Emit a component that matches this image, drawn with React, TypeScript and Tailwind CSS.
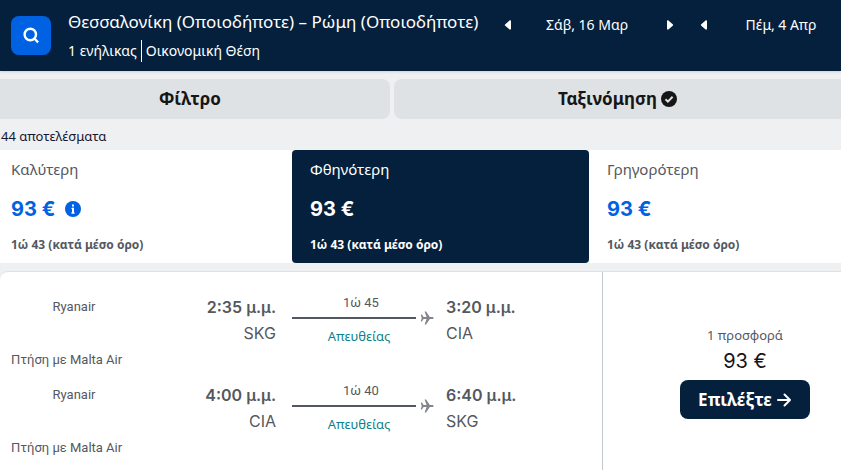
import { useState } from 'react'

type Leg = {
  airline: string
  operator: string
  departTime: string
  from: string
  arriveTime: string
  to: string
  duration: string
  stops: string
}

const LEGS: Leg[] = [
  {
    airline: 'Ryanair',
    operator: 'Πτήση με Malta Air',
    departTime: '2:35 μ.μ.',
    from: 'SKG',
    arriveTime: '3:20 μ.μ.',
    to: 'CIA',
    duration: '1ώ 45',
    stops: 'Απευθείας',
  },
  {
    airline: 'Ryanair',
    operator: 'Πτήση με Malta Air',
    departTime: '4:00 μ.μ.',
    from: 'CIA',
    arriveTime: '6:40 μ.μ.',
    to: 'SKG',
    duration: '1ώ 40',
    stops: 'Απευθείας',
  },
]

const SORTS = [
  { key: 'best', label: 'Καλύτερη', price: '93 €', average: '1ώ 43 (κατά μέσο όρο)', info: true },
  { key: 'cheapest', label: 'Φθηνότερη', price: '93 €', average: '1ώ 43 (κατά μέσο όρο)', info: false },
  { key: 'fastest', label: 'Γρηγορότερη', price: '93 €', average: '1ώ 43 (κατά μέσο όρο)', info: false },
]

function Triangle({ flip = false }: { flip?: boolean }) {
  return (
    <svg className="h-3 w-3" viewBox="0 0 12 12" fill="currentColor">
      <path
        d={
          flip
            ? 'M3 2.5v7c0 1.200.9 1.500 1.700.8l4-3.500a1 1 0 000-1.600l-4-3.500C3.900 1 3 1.300 3 2.500z'
            : 'M9 2.500v7c0 1.200-.9 1.500-1.700.8l-4-3.500a1 1 0 010-1.600l4-3.500C8.100 1 9 1.300 9 2.500z'
        }
      />
    </svg>
  )
}

function Plane() {
  return (
    <svg className="h-[14px] w-[14px] shrink-0 text-[#82858e]" viewBox="0 0 14 14" fill="currentColor">
      <path d="M.8 3.400h1.100l1.700 2.500h3L4.600.6h1.500l3.700 5.300h2.500c.7 0 1.300.5 1.300 1.100s-.6 1.100-1.300 1.100H9.800l-3.700 5.300H4.600l2-5.300h-3l-1.700 2.500H.8L1.700 7z" />
    </svg>
  )
}

function LegRow({ leg }: { leg: Leg }) {
  return (
    <div className="h-[88px]">
      <div className="flex h-16">
        <div className="w-[148px] pt-2 text-center font-[Roboto,sans-serif] text-[13px] leading-[22px]">
          {leg.airline}
        </div>
        <div className="flex-1 pt-[6px] text-right leading-[26px]">
          <div className="font-semibold">{leg.departTime}</div>
          <div>{leg.from}</div>
        </div>
        <div className="w-[170px] pl-4">
          <div className="pt-1 pr-4 text-center font-[Roboto,sans-serif] text-[13px] leading-[22px]">
            {leg.duration}
          </div>
          <div className="flex h-2 items-center gap-1 pr-3">
            <div className="h-[2px] flex-1 bg-[#545860]" />
            <Plane />
          </div>
          <div className="pt-1 pr-5 text-center font-['Noto_Sans',sans-serif] text-[13px] leading-5 text-[#0c838a]">
            {leg.stops}
          </div>
        </div>
        <div className="w-[156px] pt-[6px] leading-[26px]">
          <div className="font-semibold">{leg.arriveTime}</div>
          <div>{leg.to}</div>
        </div>
      </div>
      <div className="pl-[11px] font-[Roboto,sans-serif] text-[13px] leading-4">{leg.operator}</div>
    </div>
  )
}

export default function App() {
  const [sort, setSort] = useState('cheapest')

  return (
    <div className="min-h-screen overflow-hidden bg-[#eff0f2] font-['Noto_Sans',sans-serif] text-[#545860]">
      {/* Header */}
      <header className="flex h-[71px] bg-[#05203c] text-white shadow">
        <button
          aria-label="Αναζήτηση"
          className="mt-4 ml-[11px] flex h-[39px] w-10 shrink-0 items-center justify-center rounded-lg bg-[#0062e3]"
        >
          <svg className="h-[17px] w-[17px]" viewBox="0 0 17 17" fill="none" stroke="currentColor" strokeWidth="2.4">
            <circle cx="7.300" cy="7.500" r="5.700" />
            <path d="M11.300 11.500l3.800 3.800" />
          </svg>
        </button>
        <div className="ml-[17px] w-[434px] shrink-0 whitespace-nowrap">
          <h1 className="pt-2 text-[17px] leading-7">Θεσσαλονίκη (Οποιοδήποτε) – Ρώμη (Οποιοδήποτε)</h1>
          <div className="flex pt-1 text-sm leading-[22px]">
            <span className="border-r border-white pr-1">1 ενήλικας</span>
            <span className="pl-1">Οικονομική Θέση</span>
          </div>
        </div>
        <div className="flex h-[50px] flex-1 items-center text-sm whitespace-nowrap">
          <button aria-label="Προηγούμενη ημέρα αναχώρησης">
            <Triangle />
          </button>
          <span className="w-[150px] shrink-0 pr-1 text-center">Σάβ, 16 Μαρ</span>
          <button aria-label="Επόμενη ημέρα αναχώρησης">
            <Triangle flip />
          </button>
          <button className="ml-[22px]" aria-label="Προηγούμενη ημέρα επιστροφής">
            <Triangle />
          </button>
          <span className="w-[142px] shrink-0 text-center">Πέμ, 4 Απρ</span>
        </div>
      </header>

      {/* Filter and sort */}
      <div className="mt-2 grid grid-cols-[390fr_447fr] gap-1 text-[17px] font-bold text-[#161616]">
        <button className="h-10 rounded-r-lg bg-[#dfe2e5] pr-[10px]">Φίλτρο</button>
        <button className="flex h-10 items-center justify-center gap-1 rounded-l-lg bg-[#dfe2e5]">
          Ταξινόμηση
          <svg className="h-4 w-4" viewBox="0 0 16 16">
            <circle cx="8" cy="8" r="8" fill="currentColor" />
            <path d="M4.500 8.300l2.400 2.300 4.700-4.800" fill="none" stroke="#dfe2e5" strokeWidth="2" />
          </svg>
        </button>
      </div>

      <p className="h-[31px] pt-2 pl-px text-[13px] leading-[18px] text-[#161630]">44 αποτελέσματα</p>

      {/* Sort tabs */}
      <div className="grid grid-cols-[292fr_297fr_252fr] bg-white">
        {SORTS.map((item, i) => {
          const active = item.key === sort
          return (
            <button
              key={item.key}
              onClick={() => setSort(item.key)}
              className={`h-[113px] rounded pb-[2px] text-left ${i === 0 ? 'pl-[11px]' : 'pl-[18px]'} ${
                active ? 'bg-[#05203c] text-white' : 'bg-white'
              }`}
            >
              <div className="text-[15px] leading-6">{item.label}</div>
              <div
                className={`flex items-center gap-[10px] pt-[14px] font-[Inter,sans-serif] text-xl leading-7 font-bold ${
                  active ? 'text-white' : 'text-[#0062e3]'
                }`}
              >
                {item.price}
                {item.info && (
                  <svg className="h-4 w-4" viewBox="0 0 16 16">
                    <circle cx="8" cy="8" r="8" fill="currentColor" />
                    <path d="M8 3.400v2M8 6.800v5.600" fill="none" stroke="#fff" strokeWidth="2" />
                    <path d="M6.400 7.400H8M6.200 12h3.600" fill="none" stroke="#fff" strokeWidth="1" />
                  </svg>
                )}
              </div>
              <div className="pt-3 text-xs leading-5 font-bold">{item.average}</div>
            </button>
          )
        })}
      </div>

      {/* Ticket */}
      <article className="mt-2 grid grid-cols-[603fr_238fr] rounded-tl-lg border-t border-[#dfe2e5] bg-white">
        <div className="border-r border-[#c1c7cf] pt-4 pb-2 font-[Inter,'Noto_Sans',sans-serif]">
          {LEGS.map((leg) => (
            <LegRow key={leg.departTime} leg={leg} />
          ))}
        </div>
        <div className="flex flex-col items-center pt-[53px] pl-[46px]">
          <div className="text-[13px] leading-5">1 προσφορά</div>
          <div className="font-[Inter,sans-serif] text-xl leading-8 text-[#161616]">93 €</div>
          <button className="mt-[3px] flex h-[39px] w-[130px] items-center justify-center gap-1 rounded-lg bg-[#05203c] text-[17px] font-bold text-white">
            Επιλέξτε
            <svg className="h-4 w-4" viewBox="0 0 16 16" fill="none" stroke="currentColor" strokeWidth="2">
              <path d="M2 8h12M8.500 2.500L14 8l-5.500 5.500" strokeLinecap="round" strokeLinejoin="round" />
            </svg>
          </button>
        </div>
      </article>
    </div>
  )
}
